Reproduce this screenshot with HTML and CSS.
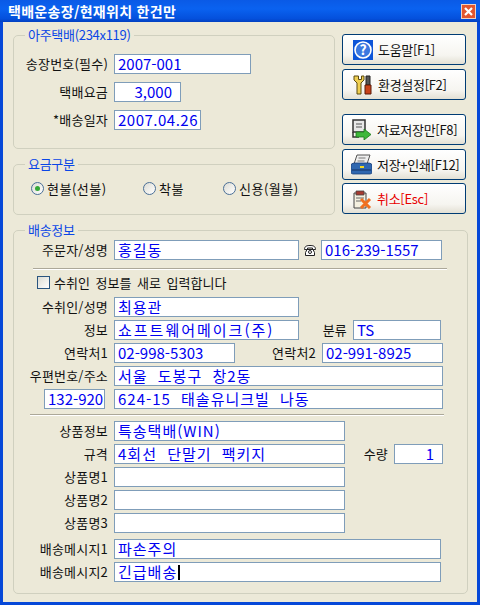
FILE: index.html
```html
<!DOCTYPE html>
<html lang="ko">
  <head>
    <meta charset="UTF-8" />
    <title>택배운송장/현재위치 한건만</title>
    <link rel="stylesheet" href="styles.css">
  </head>
  <body>
    <div class="window">
      <div class="titlebar">
        <span class="title">택배운송장/현재위치 한건만</span>
        <span class="closeBtn">
          <svg width="13" height="13" viewBox="0 0 13 13"><path d="M3 3l7 7M10 3l-7 7" stroke="#fff" stroke-width="2.2" fill="none"/></svg>
        </span>
      </div>

      <div class="content">
        <div class="top">
          <div class="leftCol">
            <fieldset class="group groupCourier">
              <legend>아주택배(234x119)</legend>
              <div class="row">
                <span class="lbl">송장번호(필수)</span>
                <div class="field w137 num">2007-001</div>
              </div>
              <div class="row">
                <span class="lbl">택배요금</span>
                <div class="field w67 num right">3,000</div>
              </div>
              <div class="row">
                <span class="lbl">*배송일자</span>
                <div class="field w87 num date">2007.04.26</div>
              </div>
            </fieldset>

            <fieldset class="group groupFee">
              <legend>요금구분</legend>
              <div class="radios">
                <label class="radio w112"><span class="dot checked"></span>현불(선불)</label>
                <label class="radio w80"><span class="dot"></span>착불</label>
                <label class="radio"><span class="dot"></span>신용(월불)</label>
              </div>
            </fieldset>
          </div>

          <div class="buttons">
            <button class="btn">
              <svg class="ico" width="20" height="20" viewBox="0 0 20 20">
                <rect width="20" height="20" fill="#0d55d8"/>
                <circle cx="10" cy="10" r="8" fill="#3b78e0" stroke="#fff" stroke-width="1.6"/>
                <text x="10" y="15" font-family="Liberation Sans" font-weight="700" font-size="14" fill="#fff" text-anchor="middle">?</text>
              </svg>
              도움말[F1]
            </button>
            <button class="btn">
              <svg class="ico" width="20" height="20" viewBox="0 0 20 20">
                <path d="M1 1v4l3 3v11h4V8l3-3V1L8.500 1v3.500h-3V1z" fill="#f0cf50" stroke="#5a4a10" stroke-width="1"/>
                <path d="M13 1h4v9h-4z" fill="#555" stroke="#222" stroke-width="1"/>
                <path d="M12 10h6v9h-6z" fill="#c8421a" stroke="#5a1a08" stroke-width="1"/>
              </svg>
              환경설정[F2]
            </button>
            <button class="btn btnGap shift">
              <svg class="ico" width="21" height="21" viewBox="0 0 21 21">
                <path d="M2 1h12v12H2z" fill="#e8e8e8" stroke="#333" stroke-width="1.500"/>
                <path d="M5 5h6M5 8h6" stroke="#555" stroke-width="1.200"/>
                <path d="M2 13v5h6" fill="none" stroke="#333" stroke-width="1.500"/>
                <path d="M5 13h8v-3l7 5.500-7 5.500v-3H5z" fill="#3fb83a" stroke="#1a7a1a" stroke-width=".8"/>
              </svg>
              자료저장만[F8]
            </button>
            <button class="btn shift">
              <svg class="ico" width="21" height="21" viewBox="0 0 21 21">
                <path d="M6 1h13l-3 9H3z" fill="#eee" stroke="#555" stroke-width="1"/>
                <path d="M7.500 4h7M6.500 7h7" stroke="#777" stroke-width="1"/>
                <path d="M3 9h15q3 0 3 3v6q0 2-2 2H2q-2 0-2-2v-6q0-3 3-3z" fill="#2f67b0" stroke="#1b3f78" stroke-width=".8"/>
                <rect x="9" y="12" width="4" height="2" fill="#f2d820"/>
                <path d="M1 16h19" stroke="#143060" stroke-width="1"/>
              </svg>
              저장+인쇄[F12]
            </button>
            <button class="btn shift cancel btnLast">
              <svg class="ico" width="21" height="21" viewBox="0 0 21 21">
                <path d="M3 5h12v15H3z" fill="#f4f0e0" stroke="#444" stroke-width="1"/>
                <path d="M5 3h8v4H5z" fill="#a83a30" stroke="#444" stroke-width=".8"/>
                <path d="M5 10h8M5 13h5" stroke="#666" stroke-width="1"/>
                <path d="M10 11l9 9M19 11l-9 9" stroke="#f07020" stroke-width="3"/>
              </svg>
              취소[Esc]
            </button>
          </div>
        </div>

        <fieldset class="group groupShip">
          <legend>배송정보</legend>
          <div class="rows">
            <div class="row">
              <span class="lbl">주문자/성명</span>
              <div class="field w185">홍길동</div>
              <svg class="phone" width="12" height="11" viewBox="0 0 12 11">
                <path d="M.5 4.500C.5 1 3 .5 6 .5s5.500.5 5.500 4h-3V3h-5v1.500z" fill="#fff" stroke="#222"/>
                <path d="M3 4.500h6l1.500 3v3h-9v-3z" fill="#fff" stroke="#222"/>
                <circle cx="6" cy="7" r="1.500" fill="none" stroke="#222"/>
              </svg>
              <div class="field w121 num">016-239-1557</div>
            </div>
          </div>

          <div class="sep sepFirst"></div>

          <label class="check"><span class="box"></span>수취인 정보를 새로 입력합니다</label>

          <div class="rows rowsReceiver">
            <div class="row">
              <span class="lbl">수취인/성명</span>
              <div class="field w185">최용관</div>
            </div>
            <div class="row">
              <span class="lbl">정보</span>
              <div class="field w185 wider">쇼프트웨어메이크(주)</div>
              <span class="lbl w48">분류</span>
              <div class="field w88 num">TS</div>
            </div>
            <div class="row">
              <span class="lbl">연락처1</span>
              <div class="field w121 num">02-998-5303</div>
              <span class="lbl w81">연락처2</span>
              <div class="field w121 num">02-991-8925</div>
            </div>
            <div class="row">
              <span class="lbl">우편번호/주소</span>
              <div class="field w329 spaced">서울 도봉구 창2동</div>
            </div>
            <div class="row">
              <div class="field w61 num zip">132-920</div>
              <div class="field w329 spaced">624-15 태솔유니크빌 나동</div>
            </div>
          </div>

          <div class="sep sepSecond"></div>

          <div class="rows">
            <div class="row">
              <span class="lbl">상품정보</span>
              <div class="field w231">특송택배(WIN)</div>
            </div>
            <div class="row">
              <span class="lbl">규격</span>
              <div class="field w231 spaced">4회선 단말기 팩키지</div>
              <span class="lbl w43">수량</span>
              <div class="field w49 num right">1</div>
            </div>
            <div class="row">
              <span class="lbl">상품명1</span>
              <div class="field w231"></div>
            </div>
            <div class="row">
              <span class="lbl">상품명2</span>
              <div class="field w231"></div>
            </div>
            <div class="row">
              <span class="lbl">상품명3</span>
              <div class="field w231"></div>
            </div>
          </div>

          <div class="rows rowsMessage">
            <div class="row">
              <span class="lbl">배송메시지1</span>
              <div class="field w327">파손주의</div>
            </div>
            <div class="row">
              <span class="lbl">배송메시지2</span>
              <div class="field w327">긴급배송<span class="caret"></span></div>
            </div>
          </div>
        </fieldset>
      </div>
    </div>
  </body>
</html>
```

FILE: styles.css
```css
* {
  margin: 0;
  padding: 0;
  box-sizing: border-box;
  font-family: "Noto Sans CJK KR", sans-serif;
}

body {
  width: 480px;
  height: 605px;
  overflow: hidden;
}

.window {
  width: 480px;
  height: 605px;
  background: #ece9d8;
  border: 3px solid #0648d8;
  border-top: none;
}

.titlebar {
  height: 22px;
  margin: 0 -3px;
  padding: 0 5px 0 8px;
  display: flex;
  align-items: center;
  justify-content: space-between;
  background: linear-gradient(#0a5ae6, #0a62f0 40%, #0450dc 85%, #0340c0);
}

.title {
  color: #fff;
  font-size: 14px;
  font-weight: 700;
  line-height: 22px;
  letter-spacing: .3px;
}

.closeBtn {
  width: 13px;
  height: 13px;
  display: flex;
  background: #e2562f;
  outline: 1px solid #f0d0c0;
}

.content {
  padding: 5px 0 0 10px;
}

.top {
  display: grid;
  grid-template-columns: 322px 124px;
  column-gap: 7px;
}

.group {
  border: 1px solid #d0d0bf;
  border-radius: 5px;
  padding: 0 0 0 4px;
  min-width: 0;
}

.group legend {
  margin-left: 7px;
  padding: 0 3px;
  color: #0a46e6;
  font-size: 13px;
  line-height: 16px;
  height: 16px;
  letter-spacing: -.3px;
}

.groupCourier {
  height: 122px;
  padding-top: 11px;
  display: flex;
  flex-direction: column;
}

.groupCourier .row {
  margin-bottom: 8px;
}

.groupFee {
  height: 59px;
  margin-top: 7px;
  padding-top: 8px;
}

.groupShip {
  width: 455px;
  height: 372px;
  margin-top: 7px;
  padding-top: 2px;
}

.rows {
  display: flex;
  flex-direction: column;
  gap: 3px;
}

.rowsReceiver {
  margin-top: 8px;
}

.rowsMessage {
  margin-top: 6px;
}

.row {
  display: flex;
  align-items: center;
  height: 20px;
}

.lbl {
  flex: none;
  width: 90px;
  margin-right: 6px;
  text-align: right;
  font-size: 13px;
  line-height: 20px;
  letter-spacing: .2px;
  color: #111;
  white-space: nowrap;
}

.field {
  flex: none;
  height: 20px;
  padding: 0 3px;
  background: #fff;
  border: 1px solid #7f9db9;
  color: #0000f0;
  font-size: 15px;
  line-height: 18px;
  letter-spacing: 1px;
  white-space: pre;
  overflow: hidden;
}

.num {
  letter-spacing: 0;
}

.date {
  letter-spacing: .5px;
}

.wider {
  letter-spacing: 2px;
}

.spaced {
  word-spacing: 5px;
}

.right {
  text-align: right;
  padding-right: 8px;
}

.w49 { width: 49px; }
.w61 { width: 61px; }
.w67 { width: 67px; }
.w87 { width: 87px; }
.w88 { width: 88px; }
.w121 { width: 121px; }
.w137 { width: 137px; }
.w185 { width: 185px; }
.w231 { width: 231px; }
.w327 { width: 327px; }
.w329 { width: 329px; }
.lbl.w43 { width: 43px; }
.lbl.w48 { width: 48px; }
.lbl.w81 { width: 81px; }

.zip {
  margin-left: 26px;
  margin-right: 9px;
}

.phone {
  flex: none;
  margin: 0 5px 0 5px;
}

.radios {
  display: flex;
  height: 16px;
  padding-left: 13px;
}

.radio {
  display: flex;
  align-items: center;
  gap: 3px;
  font-size: 13px;
  letter-spacing: .5px;
  color: #111;
}

.radio.w112 { width: 112px; }
.radio.w80 { width: 80px; }

.dot {
  width: 13px;
  height: 13px;
  border: 1px solid #4a6f97;
  border-radius: 50%;
  background: linear-gradient(135deg, #dcdcd4, #fff);
  display: flex;
  align-items: center;
  justify-content: center;
}

.dot.checked::after {
  content: "";
  width: 5px;
  height: 5px;
  border-radius: 50%;
  background: #34a836;
}

.check {
  height: 14px;
  margin: 5px 0 0 19px;
  display: flex;
  align-items: center;
  gap: 4px;
  font-size: 13px;
  color: #111;
  word-spacing: 2px;
}

.box {
  width: 13px;
  height: 13px;
  border: 1px solid #2a5580;
  background: linear-gradient(135deg, #dcdcd4, #fff);
}

.sep {
  height: 2px;
  border-top: 1px solid #aca899;
  border-bottom: 1px solid #fff;
}

.sepFirst {
  margin: 8px 0 0 15px;
  width: 414px;
}

.sepSecond {
  margin: 5px 0 5px 12px;
  width: 414px;
}

.buttons {
  padding-top: 7px;
  display: flex;
  flex-direction: column;
  gap: 4px;
}

.btn {
  width: 124px;
  height: 31px;
  padding-left: 10px;
  display: flex;
  align-items: center;
  gap: 5px;
  border: 1px solid #003c74;
  border-radius: 3px;
  background: linear-gradient(#fff, #f6f5f0 70%, #e3e0d4);
  font-size: 13px;
  color: #111;
  letter-spacing: -.3px;
  cursor: pointer;
}

.btn.shift {
  padding-left: 8px;
}

.btnGap {
  margin-top: 10px;
}

.btnLast {
  margin-top: -1px;
}

.cancel {
  color: #e80000;
}

.ico {
  flex: none;
}

.caret {
  display: inline-block;
  width: 2px;
  height: 15px;
  margin-left: 1px;
  vertical-align: -2px;
  background: #000;
}
```
